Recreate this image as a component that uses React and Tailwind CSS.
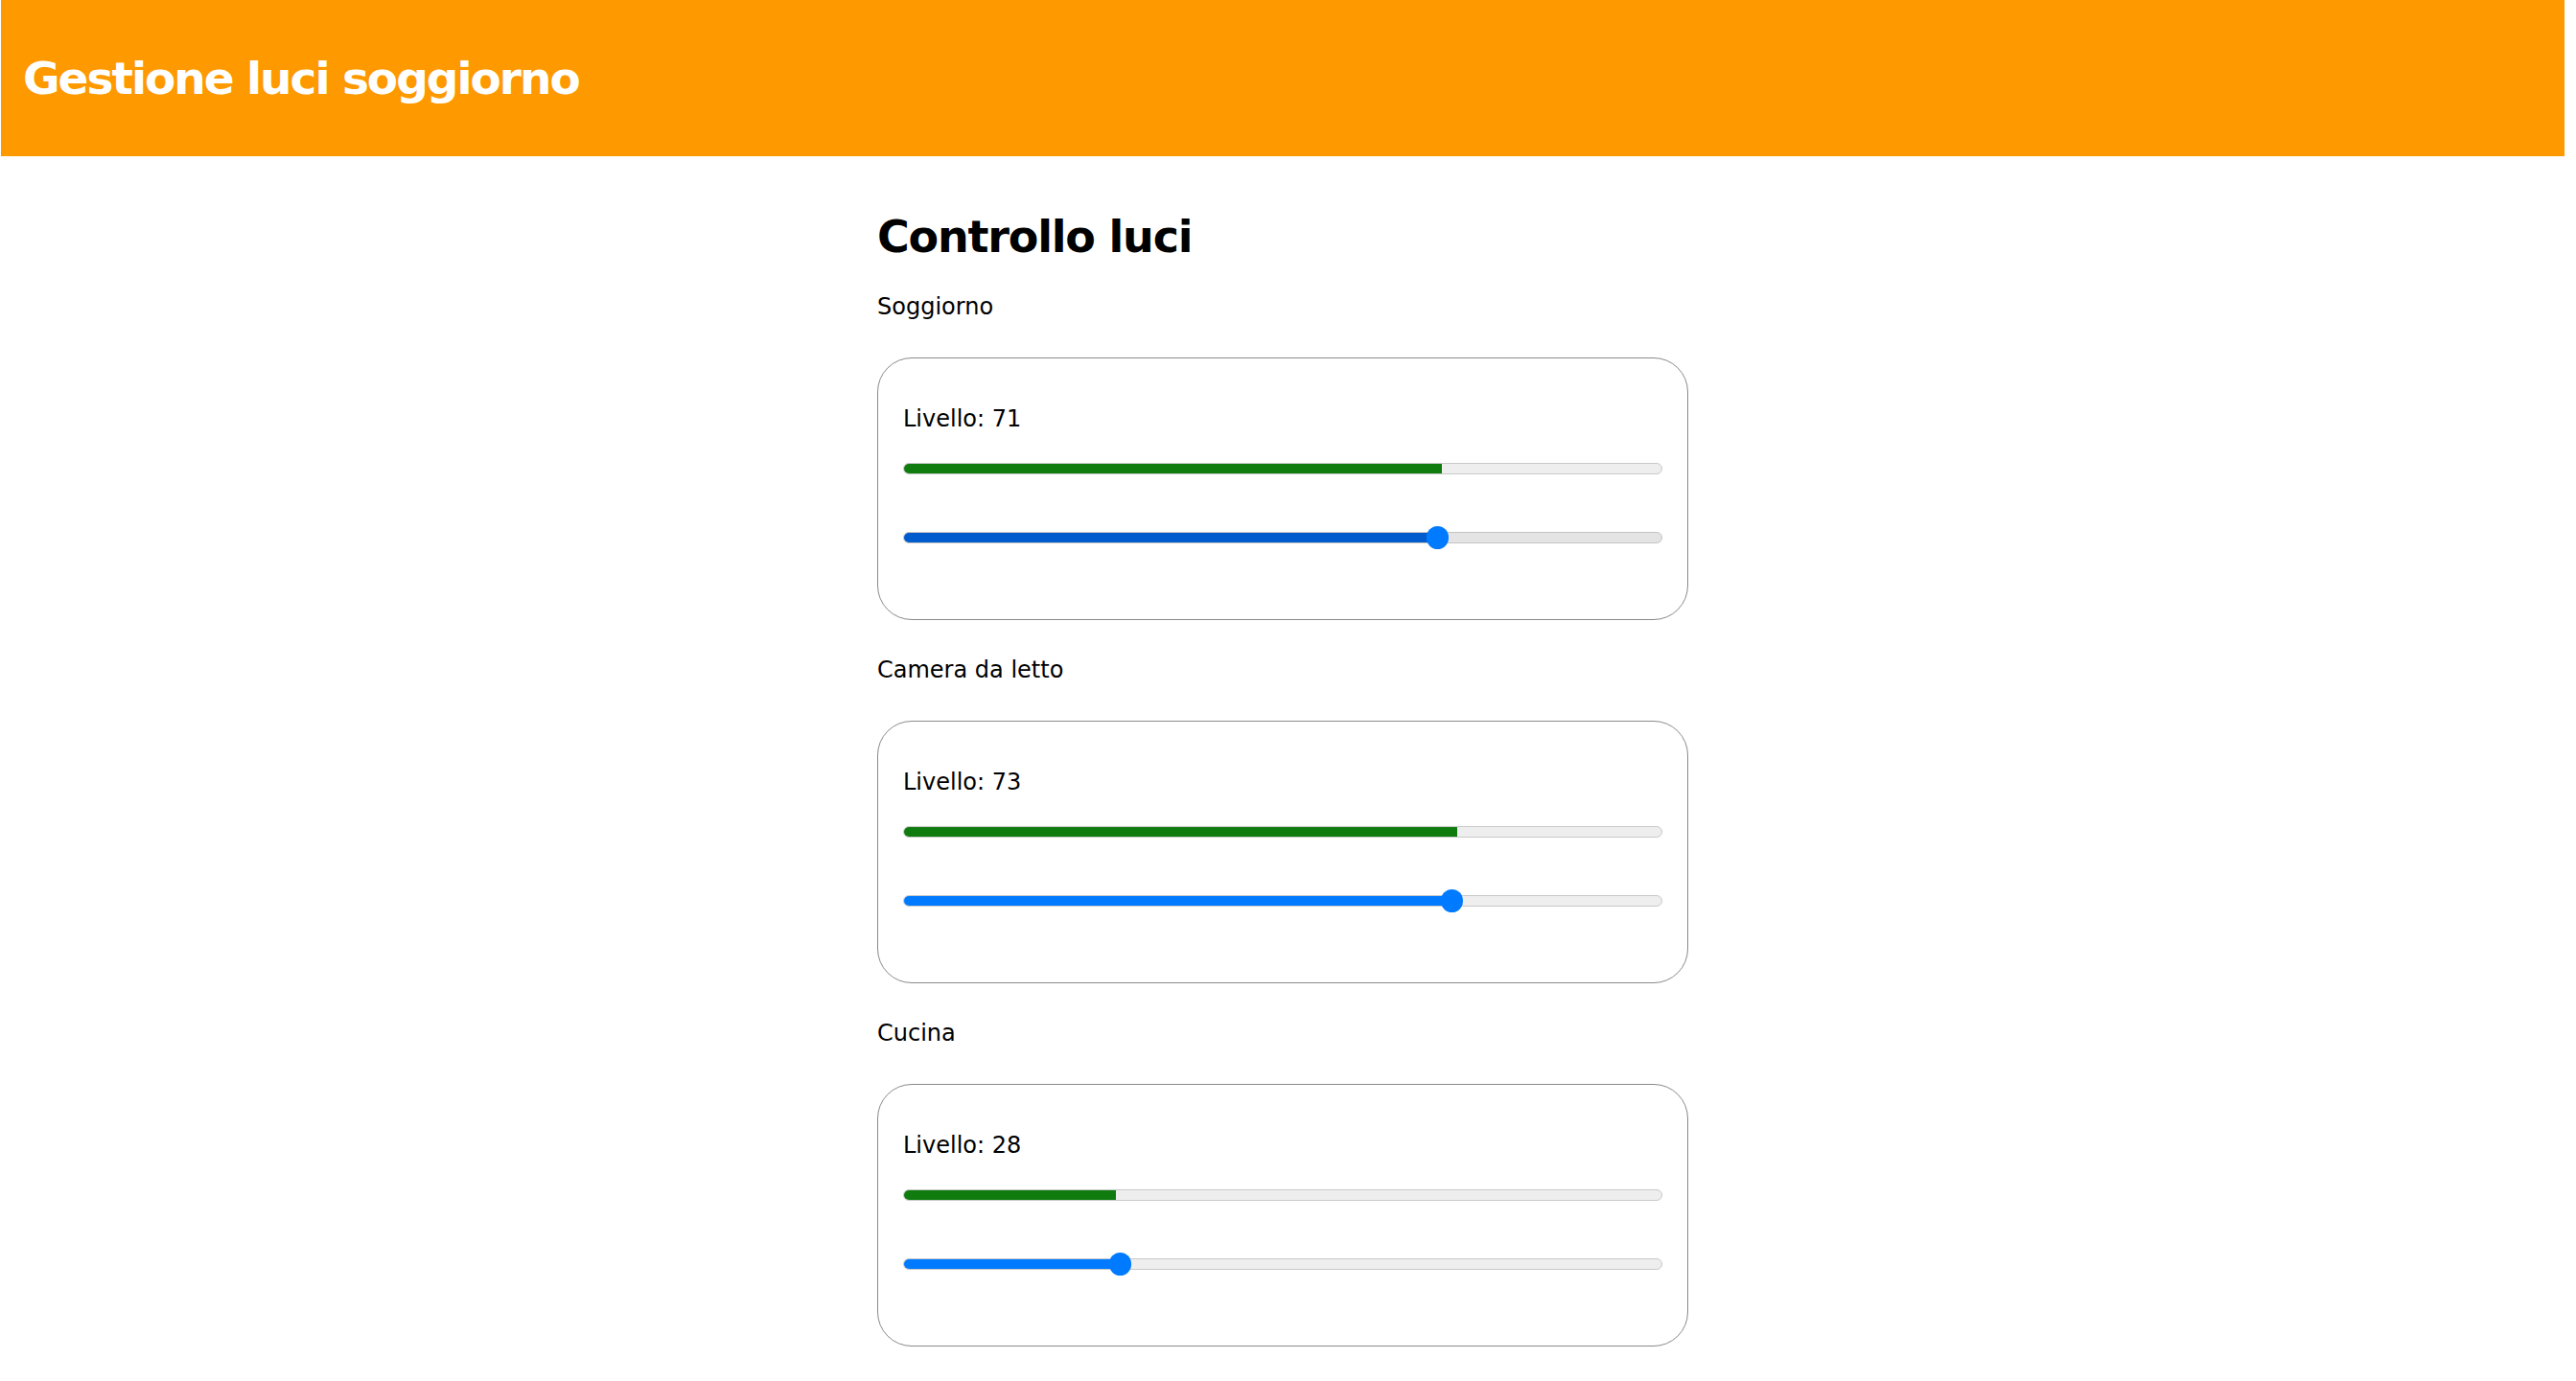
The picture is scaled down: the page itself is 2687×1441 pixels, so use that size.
import React from "react";

const rooms = [
  { name: "Soggiorno", level: 71, active: true },
  { name: "Camera da letto", level: 73 },
  { name: "Cucina", level: 28 },
];

function LevelBar({ value }) {
  return (
    <div className="mt-[32px] h-[12px] w-full overflow-hidden rounded-full border border-[#c9c9c9] bg-[#eeeeee]">
      <div className="h-full bg-[#107c10]" style={{ width: `${value}%` }} />
    </div>
  );
}

function LevelSlider({ value, active }) {
  // thumb is 23px wide, so it travels over (width - 23px)
  const left = `calc(${value}% - ${(value * 23) / 100}px)`;
  const fill = `calc(${value}% - ${(value * 23) / 100}px + 11px)`;
  return (
    <div
      role="slider"
      aria-valuemin={0}
      aria-valuemax={100}
      aria-valuenow={value}
      className="relative mt-[54px] flex h-[24px] items-center"
    >
      <div
        className={
          active
            ? "h-[12px] w-full overflow-hidden rounded-full border border-[#c4c4c4] bg-[#e4e4e4]"
            : "h-[12px] w-full overflow-hidden rounded-full border border-[#c9c9c9] bg-[#eeeeee]"
        }
      >
        <div className={active ? "h-full bg-[#005ccc]" : "h-full bg-[#007aff]"} style={{ width: fill }} />
      </div>
      <div className="absolute top-0 h-[24px] w-[23px] rounded-full bg-[#007aff]" style={{ left }} />
    </div>
  );
}

function RoomCard({ room, first }) {
  return (
    <section>
      <p className={first ? "mt-[31px] text-[24px] leading-[28px]" : "mt-[38px] text-[24px] leading-[28px]"}>
        {room.name}
      </p>
      <div className="mt-[39px] h-[274px] rounded-[36px] border border-[#8a8a8a] px-[26px] pt-[49px]">
        <p className="text-[24px] leading-[28px]">Livello: {room.level}</p>
        <LevelBar value={room.level} />
        <LevelSlider value={room.level} active={room.active} />
      </div>
    </section>
  );
}

export default function App() {
  return (
    <div className="min-h-screen bg-white font-['DejaVu_Sans',sans-serif] text-black">
      <div className="ml-[1px] mr-[12px]">
        <header className="flex h-[163px] items-center bg-[#ff9900] pl-[23px]">
          <h1 className="text-[47px] font-bold leading-[56px] tracking-[-2px] text-white">
            Gestione luci soggiorno
          </h1>
        </header>
        <main className="mx-auto w-[846px] pt-[56px]">
          <h2 className="text-[46px] font-bold leading-[56px] tracking-[-1.2px]">Controllo luci</h2>
          {rooms.map((r, i) => (
            <RoomCard key={r.name} room={r} first={i === 0} />
          ))}
        </main>
      </div>
    </div>
  );
}
